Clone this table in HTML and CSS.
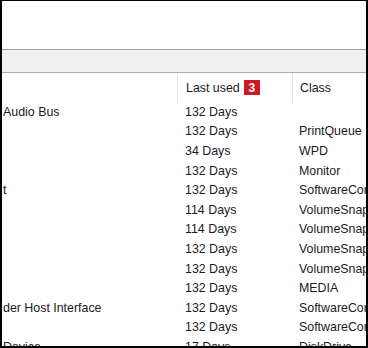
FILE: index.html
```html
<!DOCTYPE html>
<html lang="en">
<head>
  <meta charset="UTF-8" />
  <title>Devices - Last used</title>
  <link rel="stylesheet" href="styles.css">
</head>
<body>

  <div class="frame">
    <div class="top-space"></div>
    <div class="toolbar"></div>

    <div class="list">
      <div class="list-head">
        <div class="cell name"></div>
        <div class="cell used">Last used <span class="badge">3</span></div>
        <div class="cell klass">Class</div>
      </div>

      <div class="row"><div class="cell name">Audio Bus</div><div class="cell used">132 Days</div><div class="cell klass"></div></div>
      <div class="row"><div class="cell name"></div><div class="cell used">132 Days</div><div class="cell klass">PrintQueue</div></div>
      <div class="row"><div class="cell name"></div><div class="cell used">34 Days</div><div class="cell klass">WPD</div></div>
      <div class="row"><div class="cell name"></div><div class="cell used">132 Days</div><div class="cell klass">Monitor</div></div>
      <div class="row"><div class="cell name">t</div><div class="cell used">132 Days</div><div class="cell klass">SoftwareComponent</div></div>
      <div class="row"><div class="cell name"></div><div class="cell used">114 Days</div><div class="cell klass">VolumeSnapshot</div></div>
      <div class="row"><div class="cell name"></div><div class="cell used">114 Days</div><div class="cell klass">VolumeSnapshot</div></div>
      <div class="row"><div class="cell name"></div><div class="cell used">132 Days</div><div class="cell klass">VolumeSnapshot</div></div>
      <div class="row"><div class="cell name"></div><div class="cell used">132 Days</div><div class="cell klass">VolumeSnapshot</div></div>
      <div class="row"><div class="cell name"></div><div class="cell used">132 Days</div><div class="cell klass">MEDIA</div></div>
      <div class="row"><div class="cell name">der Host Interface</div><div class="cell used">132 Days</div><div class="cell klass">SoftwareComponent</div></div>
      <div class="row"><div class="cell name"></div><div class="cell used">132 Days</div><div class="cell klass">SoftwareComponent</div></div>
      <div class="row"><div class="cell name">Device</div><div class="cell used">17 Days</div><div class="cell klass">DiskDrive</div></div>
    </div>
  </div>

</body>
</html>
```

FILE: styles.css
```css
/* Reset */
* {
  margin: 0;
  padding: 0;
  box-sizing: border-box;
}

body {
  background: #fff;
  font-family: 'Liberation Sans', Arial, sans-serif;
  font-size: 12.4px;
  color: #1a1a28;
}

/* Outer window frame, cropped */
.frame {
  width: 368px;
  height: 348px;
  border-style: solid;
  border-color: #000;
  border-width: 1px 2px 2px 2px;
  overflow: hidden;
  background: #fff;
}

.top-space {
  height: 48px;
}

/* Grey toolbar strip */
.toolbar {
  height: 24px;
  background: #f0f0f0;
  border-top: 1px solid #a0a0a0;
  border-bottom: 1px solid #a4a9b2;
}

/* Details list */
.list {
  display: flex;
  flex-direction: column;
}

.list-head,
.row {
  display: grid;
  grid-template-columns: 175px 115px 1fr;
  white-space: nowrap;
}

.list-head {
  height: 29px;
  align-items: stretch;
}

.list-head .cell {
  display: flex;
  align-items: center;
}

.list-head .used,
.list-head .klass {
  border-left: 1px solid #e5e5e5;
}

.row {
  height: 19.6px;
  align-items: center;
}

.cell {
  overflow: hidden;
}

.name {
  padding-left: 1px;
}

.used {
  padding-left: 8px;
}

.klass {
  padding-left: 7px;
}

/* Red number marker */
.badge {
  display: inline-flex;
  align-items: center;
  justify-content: center;
  width: 16px;
  height: 15px;
  margin-left: 4px;
  background: #cc1a24;
  color: #fff;
  font-weight: bold;
  font-size: 12px;
}
```
